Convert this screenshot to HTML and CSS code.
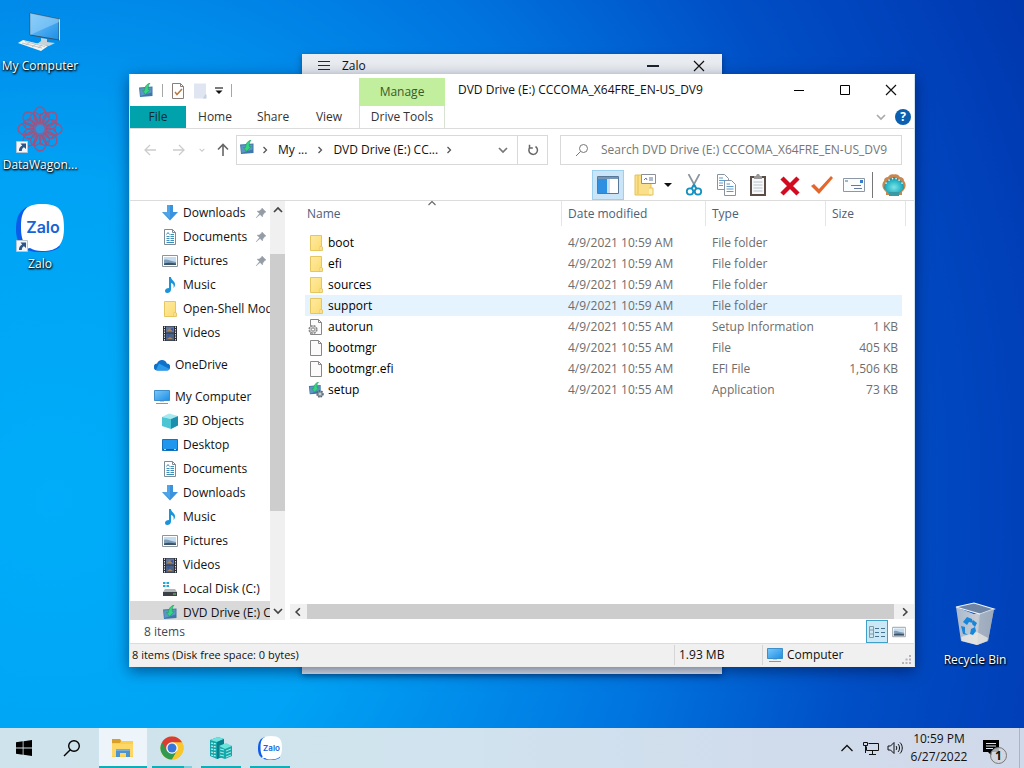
FILE: index.html
```html
<!DOCTYPE html>
<html lang="en">
<head>
<meta charset="utf-8">
<title>Desktop</title>
<link rel="stylesheet" href="styles.css">
</head>
<body>
<svg class="sprite" aria-hidden="true">
  <linearGradient id="gscreen" x1="0" y1="0" x2="1" y2="1"><stop offset="0" stop-color="#7cc8f8"/><stop offset="1" stop-color="#1b8ee8"/></linearGradient>
  <linearGradient id="gfolder" x1="0" y1="0" x2="1" y2="1"><stop offset="0" stop-color="#ffe9a2"/><stop offset="1" stop-color="#fbdc6e"/></linearGradient>
  <radialGradient id="gshell" cx=".5" cy=".6" r=".5"><stop offset="0" stop-color="#7fe3e6"/><stop offset=".8" stop-color="#22b3c4"/><stop offset="1" stop-color="#2b8f98"/></radialGradient>
  <linearGradient id="gbin" x1="0" y1="0" x2="1" y2="0"><stop offset="0" stop-color="#a9b9cc"/><stop offset=".55" stop-color="#c6cdd6"/><stop offset="1" stop-color="#8f9fb4"/></linearGradient>
  <symbol id="down" viewBox="0 0 16 16"><path d="M5 0h6v7h5l-8 8.500L0 7h5z" fill="#3b93dd"/><path d="M5 0h3v14L1 7h4z" fill="#4ea5e8"/></symbol>
  <symbol id="doc" viewBox="0 0 16 16"><path d="M2.500.5h8l3 3v12h-11z" fill="#fff" stroke="#7e8a94"/><path d="M10.500.5v3h3" fill="none" stroke="#7e8a94"/><path d="M4.500 5.500l1.500-2 1.500 2M8.500 5.500H12M4.500 7.500h3M8.500 7.500H12M4.500 9.500h3M8.500 9.500H12M4.500 11.500h3M8.500 11.500H12M4.500 13.500H12" stroke="#3c8fbd" fill="none"/></symbol>
  <symbol id="pic" viewBox="0 0 16 16"><path d="M.5 2.500h15v11H.5z" fill="#fff" stroke="#8d959c"/><path d="M2 4h12v8H2z" fill="#c3dcf0"/><path d="M2 7c3-1.500 6 1.500 12 2v3H2z" fill="#7f9db8"/><path d="M2 10.500c4-1.500 8-.5 12 0V12H2z" fill="#3d5368"/></symbol>
  <symbol id="music" viewBox="0 0 16 16"><path d="M7 0h2c0 3 4 4 4 7.500 0 1.500-.6 2.500-1.500 3.500.8-3-.5-4.500-2.500-5v6.500C9 15 7 16 5.200 16 3.800 16 3 15.200 3 14c0-1.700 1.800-3 4-3z" fill="#1b93da"/></symbol>
  <symbol id="folder" viewBox="0 0 16 16"><path d="M2.500.5h11v11l.8.500v3.500H2.500z" fill="url(#gfolder)" stroke="#e6c65e"/><path d="M12 11.500h2v4h-2z" fill="#fff0b8" stroke="#dfbd52" stroke-width=".6"/></symbol>
  <symbol id="video" viewBox="0 0 16 16"><path d="M1 1h14v15H1z" fill="#2c2f36"/><path d="M4 1.500h8v6H4z" fill="#63779a"/><path d="M4 8.500h8v7H4z" fill="#4b6288"/><path d="M5 6l3-3 3 3zM5 14l3-2 3 2z" fill="#a9855a"/><path d="M8 4l3-1v3zM5 10l3-1-1 3z" fill="#3156b0"/><path d="M2.500 1.500v14M13.500 1.500v14" stroke="#d8dade" stroke-dasharray="1.500 1"/></symbol>
  <symbol id="cloud" viewBox="0 0 16 16"><path d="M3.500 13.500a3.500 3.500 0 0 1-.4-7C3.800 4.200 5.700 3 8 3c2.400 0 4.200 1.500 4.800 3.500A3.500 3.500 0 0 1 12.500 13.500z" fill="#0f72c8"/><path d="M5 6.500L15.500 12c-.6 1-1.500 1.500-3 1.500h-9L2 13z" fill="#2b9cec"/></symbol>
  <symbol id="pc" viewBox="0 0 16 16"><path d="M.5 1.500h15v10H.5z" fill="url(#gscreen)" stroke="#3d8fc9"/><path d="M2 14.500h12" stroke="#7d99ad"/><path d="M6 12.500h4" stroke="#c2ccd4"/></symbol>
  <symbol id="cube" viewBox="0 0 16 16"><path d="M0 4l7-3.500L16 3 9 6z" fill="#a6e9ee"/><path d="M0 4l9 2v10l-9-3z" fill="#4cc5d4"/><path d="M9 6l7-3v9.500L9 16z" fill="#1b8fae"/></symbol>
  <symbol id="desk" viewBox="0 0 16 16"><path d="M.5 2.500h15v11H.5z" fill="#1f97ee" stroke="#1872b8"/><path d="M1 12.500h14" stroke="#0e5a9a"/><path d="M2 12.500h2M12 12.500h2" stroke="#b8dcf5"/></symbol>
  <symbol id="disk" viewBox="0 0 16 16"><path d="M1 1h2.500v2H1zM4.500 1H7v2H4.500zM1 4h2.500v2H1zM4.500 4H7v2H4.500z" fill="#20a9d4"/><path d="M3 8h10l2 3H1z" fill="#b3b6b9"/><path d="M1 11h14v4H1z" fill="#3d4145"/><path d="M11 13h3" stroke="#69dd74"/></symbol>
  <symbol id="dvd" viewBox="0 0 16 16"><path d="M1 4.500L14.500 3.500V13L2 14z" fill="#3f78a8"/><path d="M2 5.500l11.500-1v5L2.500 13z" fill="#5b96c4"/><path d="M7.500 11.500L4.500 7.500h2C6.500 4 8.500 1 12 0c-1.500 2-2 4-1.700 6.500h2z" fill="#35d583" stroke="#1f9c5b" stroke-width=".6"/></symbol>
  <symbol id="setup" viewBox="0 0 16 16"><use href="#dvd" width="14" height="14"/><circle cx="12" cy="12" r="3" fill="#8b99a5" stroke="#566571" stroke-width="1.500" stroke-dasharray="1.500 1"/><circle cx="12" cy="12" r="1" fill="#dce3e8"/></symbol>
  <symbol id="file" viewBox="0 0 16 16"><path d="M2.500.5h8l3 3v12h-11z" fill="#fbfbfb" stroke="#878787"/><path d="M10.500.5v3h3" fill="none" stroke="#878787"/></symbol>
  <symbol id="inf" viewBox="0 0 16 16"><use href="#file"/><circle cx="5" cy="10.500" r="3.800" fill="#d5d5d5" stroke="#8a8a8a" stroke-width="1.600" stroke-dasharray="2 1"/><circle cx="5" cy="10.500" r="1.600" fill="#fff" stroke="#888"/></symbol>
  <symbol id="pin" viewBox="0 0 12 12"><path d="M7 1l4 4-1.200.4L7.800 8l-.3 2L5 7.500 1 11l3.500-4.500L2 4.200l2.200-.2L6.700 2z" fill="#949da5" stroke="#949da5" stroke-width=".4"/></symbol>
  <symbol id="cr" viewBox="0 0 8 8"><path d="M2.500 1l3 3-3 3" fill="none" stroke="currentColor" stroke-width="1.300"/></symbol>
  <symbol id="cd" viewBox="0 0 10 10"><path d="M1 3l4 4 4-4" fill="none" stroke="currentColor" stroke-width="1.700"/></symbol>
  <symbol id="cu" viewBox="0 0 10 10"><path d="M1 7l4-4 4 4" fill="none" stroke="currentColor" stroke-width="1.700"/></symbol>
  <symbol id="thin-up" viewBox="0 0 10 10"><path d="M1.500 7L5 3.500 8.500 7" fill="none" stroke="currentColor" stroke-width="1.100"/></symbol>
  <symbol id="close" viewBox="0 0 12 12"><path d="M1 1l10 10M11 1L1 11" stroke="currentColor" stroke-width="1.200"/></symbol>
  <symbol id="short" viewBox="0 0 12 12"><path d="M.5.5h11v11H.5z" fill="#f2f6fa" stroke="#b5c4d2"/><path d="M4.500 2.500H10V8L8 6.300C6.500 7 5.800 8.200 5.800 10H3C2.800 7.500 4 5.500 6.200 4.500z" fill="#2c5484"/></symbol>
  <symbol id="zalo" viewBox="0 0 48 48"><path d="M14 2C4 5 0 12 0 25c0 15 7 23 24 23 9 0 15-1 20-5z" fill="#0b5cea"/><path d="M26 0c17 0 22 6 22 23s-5 24-22 24c-5 0-9-1-12-3-3 1-5 1-7 1 2-2 2-3 2-5-3-4-4-9-4-17C5 6 10 0 26 0z" fill="#fff"/></symbol>
</svg>

<main class="desktop">
  <a class="shortcut my-computer" href="#">
    <svg viewBox="0 0 44 44" width="44" height="44"><path d="M12 3l29 6v21l-29-5z" fill="url(#gscreen)" stroke="#33536c" stroke-width="1"/><path d="M12 3l29 6v3L12 25z" fill="#9bd4fa" opacity=".55"/><path d="M41 9l1 .5v21L41 30z" fill="#d8dee3"/><path d="M23 28l6 1v3l8 1-6 3-12-2 4-3z" fill="#c8d2db"/><path d="M0 33l5-3 25 6-7 5z" fill="#f4f4f0"/><path d="M4 33l20 5M7 31.500l20 5M8 35l4-3M14 37l4-3M20 38l4-3" stroke="#b1b9bf" stroke-width=".8"/></svg>
    <span>My Computer</span>
  </a>
  <a class="shortcut wagon" href="#">
    <span class="pict"><svg viewBox="-24 -24 48 48" width="48" height="48" fill="none" stroke="#a0527f" stroke-width="1.400"><circle r="11" fill="#3d85c6" stroke="none"/><g id="petals"><ellipse cx="14" rx="8" ry="6"/><ellipse cx="14" rx="8" ry="6" transform="rotate(45)"/><ellipse cx="14" rx="8" ry="6" transform="rotate(90)"/><ellipse cx="14" rx="8" ry="6" transform="rotate(135)"/><ellipse cx="14" rx="8" ry="6" transform="rotate(180)"/><ellipse cx="14" rx="8" ry="6" transform="rotate(225)"/><ellipse cx="14" rx="8" ry="6" transform="rotate(270)"/><ellipse cx="14" rx="8" ry="6" transform="rotate(315)"/></g><use href="#petals" transform="rotate(22) scale(.8)"/><circle r="15" stroke-dasharray="3 4"/><circle r="5" fill="#2c93dd" stroke="#6f6ca9"/></svg><svg class="badge"><use href="#short"/></svg></span>
    <span>DataWagon...</span>
  </a>
  <a class="shortcut zalo-link" href="#">
    <span class="pict"><svg viewBox="0 0 48 48" width="48" height="48"><use href="#zalo"/><text x="27" y="29" text-anchor="middle" class="zalo-word">Zalo</text></svg><svg class="badge"><use href="#short"/></svg></span>
    <span>Zalo</span>
  </a>
  <a class="shortcut bin" href="#">
    <svg viewBox="0 0 44 44" width="44" height="44"><path d="M3 5l5 34 16 4 11-4 6-32-20 5z" fill="url(#gbin)"/><path d="M3 5l18-4 20 6-14 5z" fill="#6d84a4" stroke="#eef3f7" stroke-width="1.200"/><path d="M27 12l-3 31 11-4 6-32z" fill="#9dabbd" opacity=".8"/><path d="M8 35l16-5 11 6-1 3-10 4-15-4z" fill="#eceae4" opacity=".75"/><g fill="#1886db"><path d="M10 20l4-5 5 2 1 4-4-1-2 3zM8 24l4 1v6l3 2-5-1zM17 32l1-5 4-2 1 4-3 4zM20 18l4 3-2 4-3-3z"/></g></svg>
    <span>Recycle Bin</span>
  </a>

  <section class="back-window" aria-label="Zalo">
    <header class="back-title">
      <svg viewBox="0 0 14 12" width="14" height="12"><path d="M1 1.500h12M1 5.500h12M1 9.500h12" stroke="#222c38" stroke-width="1.200"/></svg>
      <span class="grow">Zalo</span>
      <button aria-label="Minimize"><svg viewBox="0 0 12 12" width="12" height="12"><path d="M0 6h12" stroke="#1b232d" stroke-width="2"/></svg></button>
      <button aria-label="Close"><svg width="12" height="12"><use href="#close"/></svg></button>
    </header>
  </section>

  <section class="window" aria-label="DVD Drive (E:)">
    <header class="titlebar">
      <div class="quick">
        <svg class="i16"><use href="#dvd"/></svg><i class="bar"></i>
        <button aria-label="Properties"><svg viewBox="0 0 14 16" width="14" height="16"><path d="M1.500.5h8l3 3v12h-11z" fill="#fff" stroke="#8b7d78"/><path d="M9.500.5v3h3" fill="none" stroke="#8b7d78"/><path d="M4 9l2 2.500L11 6" fill="none" stroke="#b67b43" stroke-width="1.500"/></svg></button>
        <button aria-label="New folder"><svg viewBox="0 0 14 16" width="14" height="16"><path d="M1 .5h12v15H1z" fill="#dfe6f1"/><path d="M12 11.500h1.500v4H10z" fill="#c4d0e2"/></svg></button>
        <button aria-label="Customize"><svg viewBox="0 0 8 8" width="8" height="8"><path d="M0 1h8" stroke="#222" stroke-width="1.200"/><path d="M.5 3.500h7L4 7z" fill="#111"/></svg></button><i class="bar"></i>
      </div>
      <div class="manage">Manage</div>
      <h1>DVD Drive (E:) CCCOMA_X64FRE_EN-US_DV9</h1>
      <div class="controls">
        <button aria-label="Minimize"><svg viewBox="0 0 12 12" width="12" height="12"><path d="M1 6.500h10" stroke="#000"/></svg></button>
        <button aria-label="Maximize"><svg viewBox="0 0 12 12" width="12" height="12"><path d="M1.500 1.500h9v9h-9z" fill="none" stroke="#000"/></svg></button>
        <button aria-label="Close"><svg width="12" height="12"><use href="#close"/></svg></button>
      </div>
    </header>
    <nav class="tabs">
      <div class="tabset"><button class="filetab">File</button><button class="home">Home</button><button>Share</button><button class="view">View</button></div>
      <button class="drive">Drive Tools</button>
      <span class="grow"></span>
      <button class="expand" aria-label="Expand ribbon"><svg width="10" height="10"><use href="#cd"/></svg></button>
      <button class="help" aria-label="Help">?</button>
    </nav>
    <div class="address">
      <button class="arrow dim" aria-label="Back"><svg viewBox="0 0 12 12" width="12" height="12"><path d="M6 1L1 6l5 5M1 6h11" fill="none" stroke="currentColor" stroke-width="1.300"/></svg></button>
      <button class="arrow dim" aria-label="Forward"><svg viewBox="0 0 12 12" width="12" height="12"><path d="M6 1l5 5-5 5M11 6H0" fill="none" stroke="currentColor" stroke-width="1.300"/></svg></button>
      <button class="recent dim" aria-label="Recent"><svg width="6" height="6"><use href="#cd"/></svg></button>
      <button class="up" aria-label="Up"><svg viewBox="0 0 12 14" width="12" height="14"><path d="M1 6.500L6 1.500l5 5M6 2v11" fill="none" stroke="currentColor" stroke-width="1.600"/></svg></button>
      <div class="crumbs">
        <svg class="i16"><use href="#dvd"/></svg>
        <svg class="i8"><use href="#cr"/></svg><a href="#">My ...</a>
        <svg class="i8"><use href="#cr"/></svg><a href="#">DVD Drive (E:) CC...</a>
        <svg class="i8 tight"><use href="#cr"/></svg><span class="grow"></span>
        <button class="drop" aria-label="Previous locations"><svg width="10" height="10"><use href="#cd"/></svg></button>
        <button class="refresh" aria-label="Refresh"><svg viewBox="0 0 12 12" width="12" height="12"><path d="M8.500 2.500A4.300 4.300 0 1 1 3 3.200M2.500.8v3.200h3.300" fill="none" stroke="#666" stroke-width="1.500"/></svg></button>
      </div>
      <label class="search"><svg viewBox="0 0 14 14" width="14" height="14"><circle cx="8.500" cy="5.500" r="4" fill="none" stroke="#777"/><path d="M5.500 8.500L1 13" stroke="#777"/></svg><input type="text" aria-label="Search" placeholder="Search DVD Drive (E:) CCCOMA_X64FRE_EN-US_DV9"></label>
    </div>
    <div class="toolbar">
      <button class="pane" aria-label="Navigation pane"><svg viewBox="0 0 22 18" width="22" height="18"><path d="M.5.5h21v17H.5z" fill="#fff" stroke="#58789a"/><path d="M1 1h20v2H1z" fill="#7796b4"/><path d="M1 3h9v14H1z" fill="#2f8fe0"/><path d="M10 3h3v14h-3z" fill="#c9e0f4"/></svg></button>
      <button class="newf" aria-label="Folder options"><svg viewBox="0 0 22 22" width="22" height="22"><path d="M1 1h16v20H1z" fill="#fae08a" stroke="#e5c258"/><path d="M4 1v19M15 14h4v7h-4" fill="#fff0b5" stroke="#e5c258"/><path d="M7.500.5h14v9h-14z" fill="#fff" stroke="#8a8f98"/><path d="M10 6l2-2 1 2M15 4h4M15 6h4" fill="none" stroke="#61799c"/></svg></button>
      <button class="menu-arrow" aria-label="More"><svg viewBox="0 0 8 8" width="8" height="8"><path d="M0 2h8L4 6z" fill="#111"/></svg></button>
      <button aria-label="Cut"><svg viewBox="0 0 22 22" width="22" height="22"><path d="M5.500 0l7 13M16.500 0l-7 13" stroke="#8b959d" stroke-width="1.700"/><circle cx="7" cy="17.500" r="3.200" fill="none" stroke="#1591c1" stroke-width="1.800"/><circle cx="15" cy="17.500" r="3.200" fill="none" stroke="#1591c1" stroke-width="1.800"/><path d="M8.500 14.500L11 11l2.500 3.500" fill="none" stroke="#1591c1" stroke-width="2"/></svg></button>
      <button aria-label="Copy"><svg viewBox="0 0 22 22" width="22" height="22"><g fill="#fff" stroke="#8794a0"><path d="M2.500.5h7l4 4v11h-11z"/><path d="M9.500 6.500h7l4 4v11h-11z"/></g><path d="M4 4h4M4 6.500h6M4 9h4M4 11.500h4M11.500 10H15M11.500 12.500h7M11.500 15h7M11.500 17.500h7" stroke="#5f9ac9"/></svg></button>
      <button aria-label="Paste"><svg viewBox="0 0 22 22" width="22" height="22"><path d="M3 2h16v20H3z" fill="#594d46"/><path d="M5 4h12v16H5z" fill="#f7f8fa"/><path d="M7 2h2l1-2h2l1 2h2v3H7z" fill="#989898"/><path d="M6.500 8h9M6.500 11h9M6.500 14h9M6.500 17h9" stroke="#b9c2cb"/></svg></button>
      <button aria-label="Delete"><svg viewBox="0 0 22 22" width="22" height="22"><path d="M3 4l16 16M19 4L3 20" stroke="#d20b20" stroke-width="4.500"/></svg></button>
      <button aria-label="Rename"><svg viewBox="0 0 22 22" width="22" height="22"><path d="M0 12l3-2 5 5L20 2l2 2L8 20z" fill="#e4662a"/></svg></button>
      <button aria-label="Properties"><svg viewBox="0 0 22 14" width="22" height="14"><path d="M.5.5h21v13H.5z" fill="#fbfcfd" stroke="#8c98a5"/><path d="M2 3h3" stroke="#516d8b"/><path d="M17 2h3v3h-3z" fill="#357ecb"/><path d="M8 7.500h10M11 10.500h8" stroke="#627c9e"/></svg></button>
      <i class="sep"></i>
      <button class="shell" aria-label="Open-Shell"><svg viewBox="0 0 24 22" width="24" height="22"><path d="M6 21H4v-3C-1 14 0 9 2 7c0-3 2-4 4-4 2-3 4-3 6-2.500 2-.5 4-.5 6 2.500 2 0 4 1 4 4 2 2 3 7-2 11v3h-2z" fill="#c9864f"/><path d="M7 20l-5-6 1-5 3-3 3-2 3-1 3 1 3 2 3 3 1 5-5 6z" fill="url(#gshell)"/><path d="M4 9l.1.100M7 6l.1.100M10.500 4.500l.1.100M14 4.500l.1.100M17 6l.1.100M20 9l.1.100" stroke="#e6fbfb" stroke-width="1.500" stroke-linecap="round"/><path d="M7 18h10v4H7z" fill="#3a9aa3"/></svg></button>
    </div>

    <div class="content">
      <aside class="side">
        <ul class="tree">
          <li><svg class="i16"><use href="#down"/></svg>Downloads<svg class="pin"><use href="#pin"/></svg></li>
          <li><svg class="i16"><use href="#doc"/></svg>Documents<svg class="pin"><use href="#pin"/></svg></li>
          <li><svg class="i16"><use href="#pic"/></svg>Pictures<svg class="pin"><use href="#pin"/></svg></li>
          <li><svg class="i16"><use href="#music"/></svg>Music</li>
          <li><svg class="i16"><use href="#folder"/></svg>Open-Shell Mod</li>
          <li><svg class="i16"><use href="#video"/></svg>Videos</li>
          <li class="root"><svg class="i16"><use href="#cloud"/></svg>OneDrive</li>
          <li class="root"><svg class="i16"><use href="#pc"/></svg>My Computer</li>
          <li><svg class="i16"><use href="#cube"/></svg>3D Objects</li>
          <li><svg class="i16"><use href="#desk"/></svg>Desktop</li>
          <li><svg class="i16"><use href="#doc"/></svg>Documents</li>
          <li><svg class="i16"><use href="#down"/></svg>Downloads</li>
          <li><svg class="i16"><use href="#music"/></svg>Music</li>
          <li><svg class="i16"><use href="#pic"/></svg>Pictures</li>
          <li><svg class="i16"><use href="#video"/></svg>Videos</li>
          <li><svg class="i16"><use href="#disk"/></svg>Local Disk (C:)</li>
          <li class="current"><svg class="i16"><use href="#dvd"/></svg>DVD Drive (E:) CCCOMA</li>
        </ul>
        <div class="vscroll"><svg width="10" height="10"><use href="#cu"/></svg><div class="vtrack"><div class="vthumb"></div></div><svg width="10" height="10"><use href="#cd"/></svg></div>
      </aside>
      <div class="listing">
        <svg class="sort" width="10" height="10"><use href="#thin-up"/></svg>
        <table>
          <colgroup><col><col class="c-date"><col class="c-type"><col class="c-size"></colgroup>
          <thead><tr><th>Name</th><th>Date modified</th><th>Type</th><th>Size</th></tr></thead>
          <tbody>
            <tr><td><svg class="i16"><use href="#folder"/></svg>boot</td><td>4/9/2021 10:59 AM</td><td>File folder</td><td></td></tr>
            <tr><td><svg class="i16"><use href="#folder"/></svg>efi</td><td>4/9/2021 10:59 AM</td><td>File folder</td><td></td></tr>
            <tr><td><svg class="i16"><use href="#folder"/></svg>sources</td><td>4/9/2021 10:59 AM</td><td>File folder</td><td></td></tr>
            <tr class="hover"><td><svg class="i16"><use href="#folder"/></svg>support</td><td>4/9/2021 10:59 AM</td><td>File folder</td><td></td></tr>
            <tr><td><svg class="i16"><use href="#inf"/></svg>autorun</td><td>4/9/2021 10:55 AM</td><td>Setup Information</td><td>1 KB</td></tr>
            <tr><td><svg class="i16"><use href="#file"/></svg>bootmgr</td><td>4/9/2021 10:55 AM</td><td>File</td><td>405 KB</td></tr>
            <tr><td><svg class="i16"><use href="#file"/></svg>bootmgr.efi</td><td>4/9/2021 10:55 AM</td><td>EFI File</td><td>1,506 KB</td></tr>
            <tr><td><svg class="i16"><use href="#setup"/></svg>setup</td><td>4/9/2021 10:55 AM</td><td>Application</td><td>73 KB</td></tr>
          </tbody>
        </table>
        <div class="hscroll"><svg class="flip" width="10" height="10"><use href="#cr"/></svg><div class="hthumb"></div><svg width="10" height="10"><use href="#cr"/></svg></div>
      </div>
    </div>
    <div class="details"><span class="grow">8 items</span>
      <button class="on" aria-label="Details view"><svg viewBox="0 0 18 14" width="18" height="14" fill="none" stroke="#47738e"><path d="M1.500 1.500h4v11h-4zM1.500 5h4M1.500 9h4" stroke="#8799a5"/><path d="M7 3.500h4M13 3.500h4M7 7.500h4M13 7.500h4M7 11.500h4M13 11.500h4"/></svg></button>
      <button aria-label="Thumbnail view"><svg viewBox="0 1 16 14" width="14" height="12"><use href="#pic" width="16" height="16"/></svg></button>
    </div>
    <footer class="status"><span class="free">8 items (Disk free space: 0 bytes)</span><span class="total">1.93 MB</span><span class="zone"><svg class="i16"><use href="#pc"/></svg>Computer</span><svg viewBox="0 0 9 9" width="9" height="9" fill="#b9b1b9"><path d="M7 0h2v2H7zM3.500 3.500h2v2h-2zM7 3.500h2v2H7zM0 7h2v2H0zM3.500 7h2v2h-2zM7 7h2v2H7z"/></svg></footer>
  </section>
</main>

<footer class="taskbar">
  <button class="task" aria-label="Start"><svg viewBox="0 0 16 16" width="16" height="16"><path d="M0 2.200l6.700-.9v6.300H0zM7.500 1.200L16 0v7.600H7.500zM0 8.400h6.700v6.300L0 13.800zM7.500 8.400H16V16l-8.500-1.200z"/></svg></button>
  <button class="task" aria-label="Search"><svg viewBox="0 0 18 18" width="18" height="18" fill="none" stroke="#000" stroke-width="1.400"><circle cx="11" cy="7" r="5.300"/><path d="M7.300 10.700L1 17"/></svg></button>
  <button class="task app active" aria-label="File Explorer"><svg viewBox="0 0 24 20" width="24" height="20"><path d="M1 1h8l2 2h11v16H1z" fill="#f9cf53"/><path d="M1 1h8l1 2-1 2H1z" fill="#d9a029"/><path d="M1 6h21v12H1z" fill="#fdd867"/><path d="M5 19v-8h14v8h-4v-4H9v4z" fill="#4d94cf"/><path d="M5 11h14v2H5z" fill="#75aedb"/></svg></button>
  <button class="task app chrome" aria-label="Chrome"><svg viewBox="0 0 24 24" width="24" height="24"><circle cx="12" cy="12" r="11.500" fill="#f8c62d"/><path d="M2 6.250A11.500 11.500 0 0 0 12 23.500l5-8.600-5-2.900z" fill="#2f9b50"/><path d="M12 6.250h10A11.500 11.500 0 0 1 12 23.500l5-8.500z" fill="#f8c62d"/><path d="M2 6.250A11.500 11.500 0 0 1 22 6.250H12L7 14.900z" fill="#d93d35"/><circle cx="12" cy="12" r="5.800" fill="#fff"/><circle cx="12" cy="12" r="4.500" fill="#3776dc"/></svg></button>
  <button class="task app small" aria-label="Server Manager"><svg viewBox="0 0 24 24" width="24" height="24"><path d="M1 4l8-3 6 2v17l-7 3-7-3z" fill="#11a5aa"/><path d="M1 4l8-3 6 2-7 3z" fill="#6de3dc"/><path d="M2 7l5 1M2 10l5 1M2 13l5 1M2 16l5 1M2 19l5 1" stroke="#d1f7f4" stroke-width="1.200" stroke-dasharray="2 .8"/><path d="M8 6l7-3v17l-7 3z" fill="#087f8b"/><path d="M10 11l7-3 6 2v10l-7 3-6-2z" fill="#13a9aa"/><path d="M10 10l7-3 6 3-7 3z" fill="#6de3dc"/><path d="M11 13l4 1M11 16l4 1M11 19l4 1M17 15l5-2M17 18l5-2M17 21l5-2" stroke="#ace9e7"/></svg></button>
  <button class="task app small" aria-label="Zalo"><svg viewBox="0 0 48 48" width="24" height="24"><use href="#zalo"/><text x="27" y="29" text-anchor="middle" class="zalo-word">Zalo</text></svg></button>
  <span class="grow"></span>
  <button class="tray" aria-label="Hidden icons"><svg viewBox="0 0 12 8" width="12" height="8"><path d="M.5 7L6 1.500 11.500 7" fill="none" stroke="#111" stroke-width="1.300"/></svg></button>
  <button class="tray" aria-label="Network"><svg viewBox="0 0 16 14" width="16" height="14" fill="none" stroke="#111"><path d="M5.500 2.500h10v7h-12v-4M9.500 10v3M6 13.500h7M.5 1.500h4v3h-4zM2.500 5v7"/></svg></button>
  <button class="tray" aria-label="Volume"><svg viewBox="0 0 17 14" width="17" height="14" fill="none" stroke="#111"><path d="M1 5h2.500L7 1.500v11L3.500 9H1zM9 5c1 1 1 3 0 4M11 3c2 2 2 6 0 8M13 1.500c3 3 3 8 0 11"/></svg></button>
  <div class="clock"><time>10:59 PM</time><span>6/27/2022</span></div>
  <button class="notify" aria-label="Notifications"><svg viewBox="0 0 16 16" width="16" height="16"><path d="M0 0h16v12H9v4l-4-4H0z"/><path d="M3 3.500h10M3 6h10M3 8.500h7" stroke="#dce4ef"/></svg><span class="count">1</span></button>
  <i class="peek"></i>
</footer>
</body>
</html>
```
FILE: styles.css
```css
* { box-sizing: border-box; }
html, body { height: 100%; }
body {
  margin: 0;
  display: grid;
  grid-template-rows: 1fr 40px;
  overflow: hidden;
  font: 12px/16px "Open Sans", "Noto Sans", sans-serif;
  color: #111;
  background: radial-gradient(ellipse 105% 150% at 5% 65%, #00adf9 0%, #00a3f5 28%, #0074df 57%, #004fc6 76%, #003fb8 92%, #0038ae 100%);
}
button { border: 0; padding: 0; margin: 0; background: none; font: inherit; color: inherit; display: flex; align-items: center; justify-content: center; }
a { color: inherit; text-decoration: none; }
svg { display: block; flex: none; }
.sprite { position: absolute; width: 0; height: 0; }
.grow { flex: 1; }
.i16 { width: 16px; height: 16px; }
.i8 { width: 8px; height: 8px; color: #555; }

.desktop { position: relative; }
.shortcut {
  position: absolute;
  width: 80px;
  display: flex;
  flex-direction: column;
  align-items: center;
  gap: 4px;
  color: #fff;
  white-space: nowrap;
  text-shadow: 1px 1px 2px #000, 0 1px 2px #000;
}
.my-computer { left: 0; top: 10px; }
.wagon { left: 0; top: 105px; }
.zalo-link { left: 0; top: 204px; }
.bin { right: 9px; top: 602px; gap: 6px; }
.pict { position: relative; }
.badge { position: absolute; left: 0; bottom: 0; width: 12px; height: 12px; }
.zalo-word { font: 600 16px Inter, sans-serif; fill: #1663d8; text-shadow: none; }

.back-window {
  position: absolute;
  inset: 54px 302px 54px 302px;
  background: #e9edf1;
  box-shadow: 0 2px 6px rgba(0, 20, 60, .5);
}
.back-title { display: flex; align-items: center; height: 24px; padding: 0 6px 0 15px; gap: 11px; }
.back-title button { width: 35px; }

.window {
  position: absolute;
  inset: 74px 109px 61px 129px;
  display: flex;
  flex-direction: column;
  background: #fff;
  border: 1px solid #cfe3ee;
  border-top-color: #fff;
  border-bottom-color: #eee;
  box-shadow: 0 4px 14px rgba(0, 15, 60, .55);
}
.titlebar { display: flex; align-items: stretch; height: 31px; }
.quick { display: flex; align-items: center; gap: 8px; width: 229px; padding-left: 8px; }
.bar { width: 1px; height: 13px; background: #a6a6a6; }
.manage { width: 86px; margin-top: 3px; padding-top: 6px; background: #c1ef9d; text-align: center; color: #3a5a2a; }
h1 { flex: 1; margin: 0; padding: 7px 13px; font-size: 12px; font-weight: 400; white-space: nowrap; }
.controls { display: flex; }
.controls button { width: 46px; padding-bottom: 2px; }
.tabs { display: flex; height: 23px; border-bottom: 1px solid #dcdcdc; color: #333; }
.tabset { display: flex; width: 229px; }
.tabset button { width: 58px; }
.tabset .filetab { width: 56px; background: #00a3ab; color: #0c2c30; }
.tabset .view { width: 54px; }
.drive { width: 86px; border: solid #d8e2d2; border-width: 0 1px; }
.expand { width: 24px; color: #aaa; }
.help { width: 16px; height: 16px; margin: 3px 3px 0 2px; border-radius: 8px; background: #0b5fb0; color: #fff; font-weight: 700; }

.address { display: flex; align-items: center; height: 41px; padding: 0 12px 0 5px; }
.arrow { width: 29px; }
.dim { color: #ccc; }
.recent { width: 18px; }
.up { width: 24px; color: #666; }
.crumbs { display: flex; align-items: center; gap: 9px; flex: 1 1 312px; height: 30px; padding-left: 2px; margin-left: 1px; border: 1px solid #d9d9d9; white-space: nowrap; }
.crumbs .i16 { margin-right: -3px; margin-bottom: 4px; }
.crumbs button { height: 28px; color: #777; }
.refresh { width: 30px; border-left: 1px solid #d9d9d9; }
.tight { margin-left: -2px; }
.search { display: flex; align-items: center; gap: 12px; flex: 1 1 342px; height: 30px; margin-left: 12px; padding-left: 14px; border: 1px solid #d9d9d9; }
.search input { flex: 1; min-width: 0; border: 0; padding: 0; outline: 0; background: none; font: inherit; }
.search input::placeholder { color: #767676; }

.toolbar { display: flex; justify-content: flex-end; align-items: center; gap: 10px; height: 31px; padding-right: 8px; border-bottom: 1px solid #dcdcdc; }
.toolbar .pane { width: 32px; height: 30px; background: #c9e5f7; border: 1px solid #9bd0ee; }
.toolbar .menu-arrow { margin: 0 1px 0 -2px; }
.sep { width: 1px; height: 26px; margin: 0 -1px 0 -3px; background: #777; }

.content { display: flex; flex: 1; min-height: 0; }
.side { display: flex; width: 155px; }
.tree { flex: 1; min-width: 0; margin: 0; padding: 0; list-style: none; overflow: hidden; }
.tree li { display: flex; align-items: center; gap: 5px; height: 24px; padding: 0 0 0 32px; white-space: nowrap; overflow: hidden; }
.tree .root { padding-left: 24px; margin-top: 8px; }
.tree .current { background: #d9d9d9; }
.pin { width: 12px; height: 12px; margin: 0 3px 0 auto; }
.vscroll { display: flex; flex-direction: column; align-items: center; width: 15px; padding: 4px 0; background: #f0f0f0; color: #444; }
.vtrack { flex: 1; width: 100%; padding-top: 39px; }
.vthumb { height: 73%; background: #cdcdcd; }

.listing { position: relative; display: flex; flex-direction: column; flex: 1; min-width: 0; padding-left: 5px; }
.sort { position: absolute; left: 142px; top: -3px; color: #666; }
table { margin: 0 8px 0 15px; border-collapse: separate; border-spacing: 0; table-layout: fixed; }
.c-date { width: 144px; }
.c-type { width: 120px; }
.c-size { width: 80px; }
th { height: 25px; padding: 0 6px; border-right: 1px solid #e5e5e5; text-align: left; font-weight: 400; color: #4c607a; }
th:first-child { padding-left: 2px; }
tbody::before { content: ""; display: block; height: 6px; }
td { height: 21px; padding: 0 6px; color: #6d6d6d; white-space: nowrap; vertical-align: middle; line-height: 21px; }
td:first-child { padding-left: 3px; color: #000; }
td .i16 { display: inline-block; vertical-align: middle; margin: -2px 4px 0 0; }
td:last-child { text-align: right; padding: 0 4px 0 0; border-right: 4px solid transparent; background-clip: padding-box; }
.hover td { background-color: #e5f3ff; }
.hscroll { display: flex; align-items: center; height: 15px; margin-top: auto; margin-bottom: 1px; background: #f0f0f0; color: #444; padding: 0 4px 0 3px; gap: 4px; }
.hthumb { flex: 1; height: 15px; margin-right: 2px; background: #cdcdcd; }
.flip { rotate: 180deg; }

.details { display: flex; align-items: center; height: 23px; padding: 0 6px 0 14px; gap: 2px; color: #3c4a5c; }
.details button { width: 18px; height: 23px; }
.details .on { width: 22px; background: #cbe8f6; border: 1px solid #42a0c8; }
.status { display: flex; align-items: center; height: 23px; background: #f0f0f0; border-top: 1px solid #dcdcdc; padding-right: 3px; white-space: nowrap; }
.free { flex: 1; padding-left: 2px; font-size: 11px; }
.total { width: 88px; padding: 2px 4px; border-left: 1px solid #d6d6d6; }
.zone { display: flex; gap: 4px; width: 140px; padding: 2px 4px; border-left: 1px solid #d6d6d6; }
.status > svg { align-self: flex-end; margin-bottom: 2px; }

.taskbar { display: flex; align-items: stretch; background: linear-gradient(90deg, #cfe3ed 0%, #d0e3ee 45%, #d0dcec 75%, #d0d9ea 100%); }
.task { width: 48px; }
.app { margin-left: 1px; background: linear-gradient(#12aeb8, #12aeb8) center bottom / 100% 2px no-repeat; }
.active { margin-left: 3px; background-color: #edf5fa; }
.chrome { background-image: linear-gradient(90deg, #12aeb8 32px, #7dcfdc 32px); background-size: 40px 2px; }
.small { background-size: 40px 2px; }
.tray { width: 24px; }
.clock { display: flex; flex-direction: column; align-items: center; justify-content: center; width: 64px; line-height: 18px; white-space: nowrap; }
.notify { position: relative; width: 40px; }
.count { position: absolute; left: 19px; top: 19px; width: 17px; height: 17px; border: 1px solid #777; border-radius: 9px; background: #d2d6dccc; font-weight: 700; line-height: 15px; }
.peek { width: 1px; margin: 0 4px 0 8px; background: #a9b4c4; }
```
